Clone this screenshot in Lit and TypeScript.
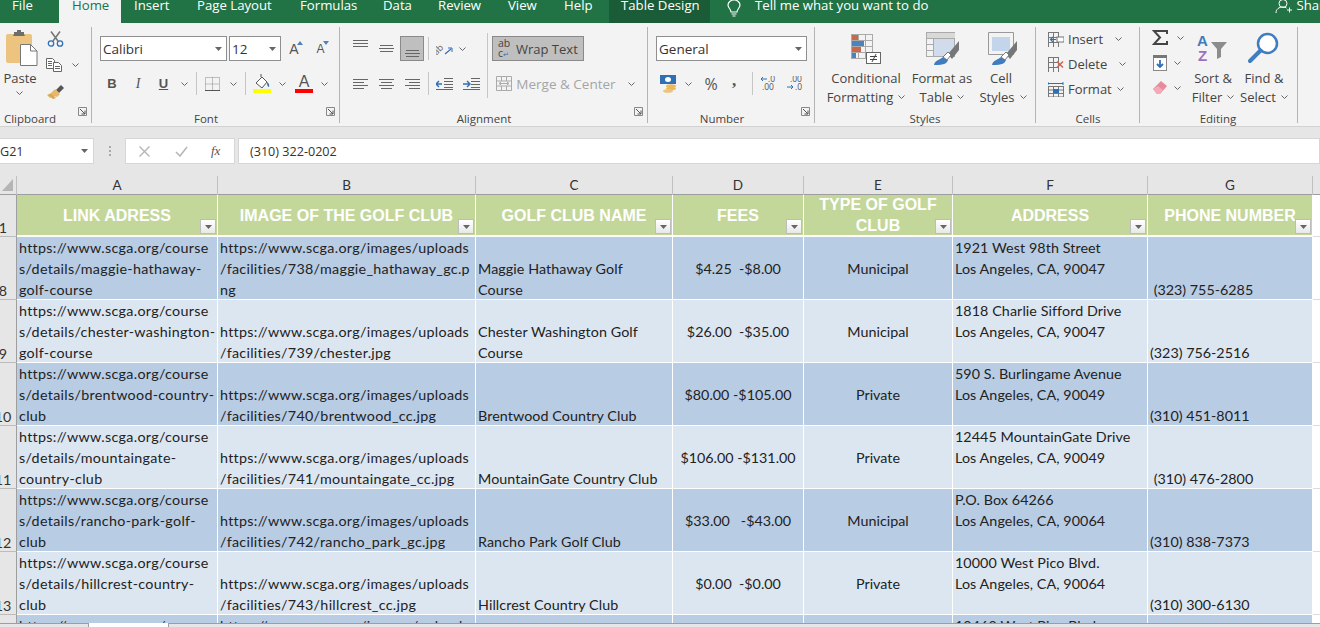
import { LitElement, html, css, svg, TemplateResult } from "lit";
import { customElement } from "lit/decorators.js";

type C = TemplateResult | string;
type Item = [number, number, C];
const place = (x0: number, items: Item[]) => {
  let cur = x0;
  return items.map(([x, w, c]) => {
    const m = x - cur;
    cur = x + w;
    return html`<div class="it" style="margin-left:${m}px;width:${w}px">${c}</div>`;
  });
};
const ic = (w: number, h: number, body: unknown) =>
  html`<svg width=${w} height=${h} viewBox="0 0 ${w} ${h}" fill="none">${body}</svg>`;

const chev = ic(7, 4, svg`<path d="M.5.5 3.5 3.5 6.5.5" stroke="#666" stroke-width="1"/>`);
const tri = ic(7, 4, svg`<path d="M0 0h7L3.500 4z" fill="#666"/>`);
const lines = (w: number, rows: [number, number, number][], col = "#666") =>
  svg`${rows.map(([x, y, l]) => svg`<rect x=${x} y=${y} width=${l} height="1" fill=${col}/>`)}`;

const paste = ic(32, 36, svg`
  <rect x="0" y="4" width="26" height="29" rx="2" fill="#edc47f"/>
  <path d="M8 4V2h3V0h4v2h3v2l1 2H7z" fill="#6d6d6d"/>
  <path d="M14.500 14.500h10l6.500 6.500v14.500h-16.500z" fill="#fff" stroke="#777"/>
  <path d="M24.500 14.500v6.500h6.500" stroke="#777"/>`);
const cut = ic(17, 16, svg`
  <path d="M4 .5 11 10M13 .5 6 10" stroke="#777" stroke-width="1.600"/>
  <circle cx="4" cy="12.500" r="2.700" stroke="#2f6fb5" stroke-width="1.300"/>
  <circle cx="13" cy="12.500" r="2.700" stroke="#2f6fb5" stroke-width="1.300"/>`);
const copy = ic(16, 14, svg`
  <path d="M.5.500h6l2 2v8h-8z" fill="#fff" stroke="#666"/>
  <path d="M7.500 4.500h5l3 3v6h-8z" fill="#fff" stroke="#666"/>
  ${lines(0, [[2, 3, 4], [2, 5, 4], [2, 7, 4], [9, 8, 5], [9, 10, 5]])}`);
const painter = ic(18, 16, svg`
  <path d="M9 5 14 0l3 3-5 5z" fill="#555"/>
  <path d="M8 4l5 5-3 3-4-1-3 2-3-3 4-2 1-1z" fill="#e8b867"/>
  <path d="M6 14 1 10l3-1 5 4z" fill="#d9a650"/>`);
const borders = ic(15, 14, svg`
  <path d="M.5.500h14v13H.5zM7.500.500v13M.5 7h14" stroke="#888" stroke-dasharray="1 1"/>
  <rect x="0" y="13" width="15" height="1" fill="#555"/>`);
const bucket = ic(18, 19, svg`
  <path d="M3 9 9 3l5 5-5 6z" fill="#fff" stroke="#555"/>
  <path d="M8 3V0" stroke="#555"/>
  <path d="M14 8c2 1 2.500 3 2 5-1.500-.5-2-2-2-5z" fill="#2f6fb5"/>
  <rect x="0" y="15" width="18" height="4" fill="#ffff00"/>`);
const redBar = ic(18, 4, svg`<rect width="18" height="4" fill="#ff0000"/>`);
const upTri = ic(6, 4, svg`<path d="M0 4h6L3 0z" fill="#4f81bd"/>`);
const dnTri = ic(6, 4, svg`<path d="M0 0h6L3 4z" fill="#4f81bd"/>`);
const al = (rows: [number, number, number][], h = 14) => ic(15, h, lines(15, rows, "#666"));
const topA = al([[0, 0, 15], [0, 3, 15], [0, 6, 15]], 9);
const midA = al([[1, 0, 13], [0, 3, 15], [1, 6, 13]], 7);
const botA = al([[1, 0, 13], [0, 3, 15], [1, 6, 13]], 7);
const leftA = al([[0, 0, 15], [0, 3, 11], [0, 6, 15], [0, 9, 11]], 10);
const centA = al([[0, 0, 15], [2, 3, 11], [0, 6, 15], [2, 9, 11]], 10);
const rightA = al([[0, 0, 15], [4, 3, 11], [0, 6, 15], [4, 9, 11]], 10);
const orient = ic(18, 14, svg`
  <text x="0" y="12" transform="rotate(-45 2 12)" font-family="Open Sans" font-size="9" fill="#666">ab</text>
  <path d="M9 12 15 7" stroke="#2f6fb5" stroke-width="1.200"/><path d="M12 6h4v4" stroke="#2f6fb5"/>`);
const outdent = ic(17, 12, svg`
  <path d="M6 6H0M3 3 0 6l3 3" stroke="#2f6fb5" stroke-width="1.400"/>
  ${lines(0, [[8, 0, 9], [8, 3, 9], [8, 6, 9], [8, 9, 9]])}<rect x="0" y="11" width="17" height="1" fill="#666"/>`);
const indent = ic(17, 12, svg`
  <path d="M0 6h6M4 3l3 3-3 3" stroke="#2f6fb5" stroke-width="1.400"/>
  ${lines(0, [[8, 0, 9], [8, 3, 9], [8, 6, 9], [8, 9, 9]])}<rect x="0" y="11" width="17" height="1" fill="#666"/>`);
const merge = ic(16, 15, svg`
  <path d="M.5.500h15v14H.5zM.5 5h15M.5 10h15M5.500.500V5M10.500.500V5M5.500 10v4.500M10.500 10v4.500" stroke="#aaa"/>
  <path d="M3 7.500h10M5 6 3 7.500 5 9M11 6l2 1.500L11 9" stroke="#aaa"/>`);
const abc = html`<span class="abc"><span>ab</span><span>c<small>↵</small></span></span>`;
const currency = ic(18, 18, svg`
  <rect x="0" y="0" width="16" height="9" fill="#2f6fb5"/>
  <ellipse cx="8" cy="4.500" rx="3" ry="2.500" fill="#fff"/>
  <ellipse cx="11" cy="11" rx="5" ry="1.800" fill="#e9b95e"/>
  <ellipse cx="11" cy="13.500" rx="5" ry="1.800" fill="#e9b95e"/>
  <ellipse cx="8" cy="16" rx="5" ry="1.800" fill="#edc47f"/>`);
const smallT = (x: number, y: number, t: string) =>
  svg`<text x=${x} y=${y} font-family="Open Sans" font-size="8.500" fill="#555">${t}</text>`;
const incD = ic(16, 15, svg`
  <path d="M6 3H0M2 1 0 3l2 2" stroke="#2f6fb5"/>${smallT(7, 6, ".0")}${smallT(1, 14, ".00")}`);
const decD = ic(16, 15, svg`
  ${smallT(3, 6, ".00")}<path d="M0 11h6M4 9l2 2-2 2" stroke="#2f6fb5"/>${smallT(8, 14, ".0")}`);
const grid = (x: number, y: number, cw: number, ch: number, nx: number, ny: number, col = "#aaa") => svg`
  ${Array.from({ length: nx + 1 }, (_, i) => svg`<rect x=${x + i * cw} y=${y} width="1" height=${ny * ch + 1} fill=${col}/>`)}
  ${Array.from({ length: ny + 1 }, (_, i) => svg`<rect x=${x} y=${y + i * ch} width=${nx * cw + 1} height="1" fill=${col}/>`)}`;
const condF = ic(30, 30, svg`
  ${grid(0, 0, 7, 6, 3, 4)}
  <rect x="1" y="1" width="6" height="5" fill="#c8694a"/>
  <rect x="1" y="7" width="12" height="5" fill="#4f81bd"/>
  <rect x="1" y="13" width="9" height="5" fill="#c8694a"/>
  <rect x="1" y="19" width="4" height="5" fill="#4f81bd"/>
  <rect x="15.500" y="18.500" width="14" height="11" fill="#fff" stroke="#666"/>
  <path d="M19 22.500h7M19 25.500h7M25 20l-4 8" stroke="#444"/>`);
const brush = svg`
  <path d="M22 22 33 9v9l-7 9z" fill="#777"/>
  <path d="M8 33c1-5 6-5 9-8l5 3c-1 3-3 5-14 5z" fill="#3f7cc0"/>
  <path d="M17 25l5-5 3 3-4 5z" fill="#fff" stroke="#777"/>`;
const fmtTable = ic(34, 33, svg`
  ${grid(0, 0, 7, 6, 4, 4)}
  <rect x="1" y="1" width="28" height="5" fill="#d9d9d9"/>
  <rect x="8" y="7" width="20" height="17" fill="#d0dcec"/>
  ${brush}`);
const cellSt = ic(30, 33, svg`
  <path d="M.5.500h25v22H.5z" stroke="#999"/>
  <rect x="4" y="5" width="18" height="14" fill="#c3d5ea"/>
  <g transform="translate(-4 0)">${brush}</g>`);
const insI = ic(16, 15, svg`
  ${grid(0, 0, 5, 5, 2, 3, "#777")}
  <rect x="9" y="5" width="7" height="5" fill="#fff" stroke="#777"/>
  <path d="M8 7.500H3M5 5 2.500 7.500 5 10" stroke="#2f6fb5" stroke-width="1.200"/>`);
const delI = ic(16, 15, svg`
  ${grid(0, 0, 5, 5, 2, 3, "#777")}
  <path d="M9 4.500l6 6M15 4.500l-6 6" stroke="#d9614c" stroke-width="1.500"/>`);
const fmtI = ic(16, 15, svg`
  <path d="M0 1.500h15M0 0v3M15 0v3" stroke="#2f6fb5"/>
  ${grid(0, 4, 5, 3.500, 3, 3, "#777")}
  <rect x="5" y="7" width="6" height="4" fill="#2f6fb5"/>`);
const sigma = ic(16, 15, svg`<path d="M15 4V1H2l6 6.500L2 14h13v-3" stroke="#444" stroke-width="2"/>`);
const fillI = ic(14, 16, svg`
  <rect x=".5" y=".5" width="13" height="15" fill="#fff" stroke="#888"/>
  <rect x="0" y="0" width="14" height="3" fill="#777"/>
  <path d="M7 5v7M4 9l3 3 3-3" stroke="#2f6fb5" stroke-width="1.800"/>`);
const eraser = ic(14, 13, svg`
  <path d="M0 8 8 0l6 5-7 8H4z" fill="#e78a9b"/><path d="M0 8l4 5h3l3-4-5-4z" fill="#f2aab6"/>`);
const sortI = ic(31, 29, svg`
  <text x="0" y="13" font-family="Liberation Sans" font-weight="700" font-size="15" fill="#3f7cc0">A</text>
  <text x="1" y="28" font-family="Liberation Sans" font-weight="700" font-size="15" fill="#9e6fbf">Z</text>
  <path d="M14 9h16l-6 7v8l-4 2v-10z" fill="#8c8c8c"/>`);
const findI = ic(31, 31, svg`
  <circle cx="19.500" cy="11.500" r="9.500" stroke="#3f7cc0" stroke-width="2.500" fill="#fff"/>
  <path d="M12.500 18.500 2 29" stroke="#3f7cc0" stroke-width="4" stroke-linecap="round"/>`);
const launcher = ic(9, 9, svg`
  <path d="M.5 8.500v-8h8v8z" stroke="#888"/><path d="M2 2l5 5M7 3.500V7H3.500" stroke="#555"/>`);
const bulb = ic(14, 17, svg`
  <path d="M4 12c0-3-3-4-3-7a6 5 0 0 1 12 0c0 3-3 4-3 7z" stroke="#fff" stroke-width="1.200"/>
  <path d="M4.500 14h5M5.500 16h3" stroke="#fff"/>`);
const person = ic(17, 13, svg`
  <circle cx="8" cy="3.500" r="4" stroke="#fff"/>
  <path d="M1 13c0-4 3-6 7-6 1.500 0 2.500.3 3.500 1M12 10h5M14.500 7.500v5" stroke="#fff"/>`);
const xI = ic(11, 11, svg`<path d="M.5.500l10 10M10.500.500l-10 10" stroke="#b5b5b5" stroke-width="1.400"/>`);
const chk = ic(13, 11, svg`<path d="M1 6l4 4 7-9" stroke="#b5b5b5" stroke-width="1.500"/>`);

const t = (s: string, cls = "") => html`<span class=${"tx " + cls}>${s}</span>`;
const tc = (s: string) => html`<span class="tx">${s}<i class="tch">${chev}</i></span>`;
const box = (s: string) => html`<div class="combo"><span>${s}</span>${tri}</div>`;

interface Row { y: number; h: number; items: Item[] }
interface Group { x0: number; w: number; label: string; lx: number; launch?: number; rows: Row[] }

const groups: Group[] = [
  {
    x0: 0, w: 92, label: "Clipboard", lx: 30, launch: 78,
    rows: [
      { y: 30, h: 18, items: [[6, 32, html`<span class="pst">${paste}</span>`], [47, 17, cut]] },
      { y: 56, h: 18, items: [[46, 16, copy], [72, 7, chev]] },
      { y: 70, h: 15, items: [[0, 40, t("Paste")]] },
      { y: 85, h: 16, items: [[16, 7, chev], [47, 18, painter]] },
    ],
  },
  {
    x0: 92, w: 248, label: "Font", lx: 206, launch: 326,
    rows: [
      {
        y: 36, h: 25,
        items: [
          [100, 127, box("Calibri")], [229, 52, box("12")],
          [288, 16, html`<span class="aa big">A</span><span class="sup">${upTri}</span>`],
          [315, 15, html`<span class="aa">A</span><span class="sup">${dnTri}</span>`],
        ],
      },
      {
        y: 72, h: 23,
        items: [
          [107, 10, html`<b class="bi">B</b>`], [133, 10, html`<i class="bi">I</i>`], [158, 11, html`<u class="bi bu">U</u>`],
          [181, 7, chev], [196, 1, html`<div class="vs"></div>`], [205, 15, borders], [230, 7, chev],
          [245, 1, html`<div class="vs"></div>`], [253, 18, bucket], [279, 7, chev],
          [295, 18, html`<span class="fc"><span class="aa fa">A</span>${redBar}</span>`], [321, 7, chev],
        ],
      },
    ],
  },
  {
    x0: 340, w: 308, label: "Alignment", lx: 484, launch: 634,
    rows: [
      {
        y: 36, h: 25,
        items: [
          [353, 15, html`<span class="up3">${topA}</span>`], [379, 15, midA],
          [400, 24, html`<div class="sel"><span class="dn">${botA}</span></div>`],
          [428, 1, html`<div class="vs"></div>`], [436, 18, orient], [459, 7, chev],
          [487, 1, html`<div class="vs tall"></div>`],
          [492, 92, html`<div class="sel wrap">${abc}<span class="tx wt2">Wrap Text</span></div>`],
        ],
      },
      {
        y: 72, h: 23,
        items: [
          [353, 15, leftA], [379, 15, centA], [405, 15, rightA], [428, 1, html`<div class="vs"></div>`],
          [436, 17, outdent], [463, 17, indent], [496, 16, merge],
          [516, 100, t("Merge & Center", "off wt")], [628, 7, chev],
        ],
      },
    ],
  },
  {
    x0: 648, w: 167, label: "Number", lx: 722, launch: 801,
    rows: [
      { y: 36, h: 25, items: [[656, 151, box("General")]] },
      {
        y: 72, h: 23,
        items: [
          [660, 18, currency], [685, 7, chev], [704, 14, html`<span class="pct">%</span>`],
          [731, 6, html`<b class="pct cm">,</b>`], [752, 1, html`<div class="vs"></div>`],
          [761, 16, incD], [787, 16, decD],
        ],
      },
    ],
  },
  {
    x0: 815, w: 221, label: "Styles", lx: 925,
    rows: [
      { y: 32, h: 33, items: [[851, 30, condF], [926, 34, fmtTable], [988, 30, cellSt]] },
      { y: 69, h: 18, items: [[821, 90, t("Conditional")], [907, 70, t("Format as")], [976, 50, t("Cell")]] },
      { y: 87, h: 19, items: [[821, 90, tc("Formatting")], [907, 70, tc("Table")], [976, 54, tc("Styles")]] },
    ],
  },
  {
    x0: 1036, w: 104, label: "Cells", lx: 1088,
    rows: [
      { y: 30, h: 18, items: [[1048, 16, insI], [1068, 40, t("Insert", "l")], [1115, 7, chev]] },
      { y: 55, h: 18, items: [[1048, 16, delI], [1068, 44, t("Delete", "l")], [1119, 7, chev]] },
      { y: 80, h: 18, items: [[1048, 16, fmtI], [1068, 46, t("Format", "l")], [1117, 7, chev]] },
    ],
  },
  { x0: 1140, w: 158, label: "Editing", lx: 1218, rows: [] },
];

const editingBody = html`
  <div class="edit">
    <div class="r" style="height:15px;margin-top:3px">${place(1140, [[1152, 16, sigma], [1177, 7, chev]])}</div>
    <div class="r" style="height:16px;margin-top:10px">${place(1140, [[1153, 14, fillI], [1174, 7, chev]])}</div>
    <div class="r" style="height:13px;margin-top:10px">${place(1140, [[1153, 14, eraser], [1174, 7, chev]])}</div>
  </div>
  <div class="editb">
    <div class="r" style="height:31px;margin-top:5px">${place(1190, [[1197, 31, sortI], [1248, 31, findI]])}</div>
    <div class="r" style="height:18px;margin-top:6px">${place(1190, [[1190, 46, t("Sort &")], [1241, 46, t("Find &")]])}</div>
    <div class="r" style="height:19px;margin-top:0">${place(1190, [[1190, 46, tc("Filter")], [1239, 50, tc("Select")]])}</div>
  </div>`;

const tabs: [string, number, number, string][] = [
  ["File", 59, 12, ""], ["Home", 62, 13, "home"], ["Insert", 63, 13, ""], ["Page Layout", 103, 13, ""],
  ["Formulas", 83, 13, ""], ["Data", 55, 13, ""], ["Review", 70, 13, ""], ["View", 56, 13, ""],
  ["Help", 58, 13, ""], ["Table Design", 101, 12, "td"],
];

const cols = ["A", "B", "C", "D", "E", "F", "G"];
const heads = ["LINK ADRESS", "IMAGE OF THE GOLF CLUB", "GOLF CLUB NAME", "FEES", "TYPE OF GOLF CLUB", "ADDRESS", "PHONE NUMBER"];
const U = "https://www.scga.org/images/uploads";
const A0 = "https://www.scga.org/course";
interface D { n: string; a: string[]; b: string[]; c: string[]; d: string; e: string; f: string[]; g: string }
const data: D[] = [
  { n: "8", a: [A0, "s/details/maggie-hathaway-", "golf-course"], b: [U, "/facilities/738/maggie_hathaway_gc.p", "ng"], c: ["Maggie Hathaway Golf", "Course"], d: "$4.25  -$8.00", e: "Municipal", f: ["1921 West 98th Street", "Los Angeles, CA, 90047"], g: " (323) 755-6285" },
  { n: "9", a: [A0, "s/details/chester-washington-", "golf-course"], b: [U, "/facilities/739/chester.jpg"], c: ["Chester Washington Golf", "Course"], d: "$26.00  -$35.00", e: "Municipal", f: ["1818 Charlie Sifford Drive", "Los Angeles, CA, 90047"], g: "(323) 756-2516" },
  { n: "10", a: [A0, "s/details/brentwood-country-", "club"], b: [U, "/facilities/740/brentwood_cc.jpg"], c: ["Brentwood Country Club"], d: "$80.00 -$105.00", e: "Private", f: ["590 S. Burlingame Avenue", "Los Angeles, CA, 90049"], g: "(310) 451-8011" },
  { n: "11", a: [A0, "s/details/mountaingate-", "country-club"], b: [U, "/facilities/741/mountaingate_cc.jpg"], c: ["MountainGate Country Club"], d: "$106.00 -$131.00", e: "Private", f: ["12445 MountainGate Drive", "Los Angeles, CA, 90049"], g: " (310) 476-2800" },
  { n: "12", a: [A0, "s/details/rancho-park-golf-", "club"], b: [U, "/facilities/742/rancho_park_gc.jpg"], c: ["Rancho Park Golf Club"], d: "$33.00   -$43.00", e: "Municipal", f: ["P.O. Box 64266", "Los Angeles, CA, 90064"], g: "(310) 838-7373" },
  { n: "13", a: [A0, "s/details/hillcrest-country-", "club"], b: [U, "/facilities/743/hillcrest_cc.jpg"], c: ["Hillcrest Country Club"], d: "$0.00  -$0.00", e: "Private", f: ["10000 West Pico Blvd.", "Los Angeles, CA, 90064"], g: "(310) 300-6130" },
];
const cellLines = (ls: string[]) => ls.map((l) => html`<div>${l}</div>`);

@customElement("app-root")
export class AppRoot extends LitElement {
  static styles = css`
    :host { display: flex; flex-direction: column; width: 1320px; height: 627px; overflow: hidden; background: #fff; font-family: "Open Sans", sans-serif; color: #444; }
    .tabs { display: flex; height: 23px; flex: none; background: #217346; color: #fff; font-size: 13.200px; line-height: 11px; overflow: hidden; white-space: nowrap; }
    .tab { box-sizing: border-box; height: 23px; flex: none; }
    .tab.home { background: #f3f3f3; color: #217346; }
    .tab.td { background: #1b5c38; }
    .tell { display: flex; align-items: flex-start; }
    .bulbw { margin: 0 14px 0 17px; height: 17px; }
    .share { margin-left: 347px; display: flex; gap: 4px; }
    .ribbon { display: flex; flex: none; height: 104px; box-sizing: border-box; padding-top: 4px; background: #f3f3f3; border-bottom: 1px solid #d2d2d2; }
    .group { position: relative; flex: none; box-sizing: border-box; height: 96px; border-right: 1px solid #b4b4b4; display: flex; flex-direction: column; }
    .rows { flex: 1; min-height: 0; position: relative; }
    .r { display: flex; align-items: center; flex: none; }
    .it { flex: none; display: flex; align-items: center; justify-content: center; position: relative; height: 100%; white-space: nowrap; }
    .pst { display: flex; margin-top: 18px; }
    .lab { flex: none; height: 12px; margin-bottom: -2px; font-size: 11.500px; line-height: 12px; display: flex; color: #444; }
    .tx { font-size: 13px; line-height: 16px; white-space: nowrap; color: #444; display: inline-flex; align-items: center; }
    .tx.l { width: 100%; }
    .tx.off { color: #a5a5a5; }
    .tx.wt { font-size: 13.500px; }
    .tx.wt2 { font-size: 13px; }
    .tch { margin-left: 5px; display: inline-flex; }
    .combo { box-sizing: border-box; width: 100%; height: 25px; background: #fff; border: 1px solid #8f8f8f; display: flex; align-items: center; justify-content: space-between; padding: 0 4px 0 2px; font-size: 13.500px; color: #333; }
    .combo svg { flex: none; }
    .aa { font-family: "Liberation Sans", sans-serif; font-size: 12px; color: #555; line-height: 1; }
    .aa.big { font-size: 14px; }
    .sup { display: inline-flex; align-self: flex-start; margin-top: 5px; margin-left: -2px; }
    .fc { display: flex; flex-direction: column; align-items: center; }
    .fa { font-size: 16px; line-height: 14px; margin-bottom: 0; }
    .bi { font-family: "Liberation Serif", serif; font-size: 14px; color: #555; }
    b.bi { font-family: "Liberation Sans", sans-serif; font-size: 13px; }
    .bu { font-family: "Liberation Sans", sans-serif; font-weight: 700; font-size: 13px; }
    .vs { width: 1px; height: 23px; background: #c6c6c6; }
    .vs.tall { height: 65px; position: absolute; top: -3px; }
    .sel { box-sizing: border-box; width: 100%; height: 25px; background: #bfbfbf; border: 1px solid #8a8a8a; display: flex; align-items: center; justify-content: center; }
    .dn { display: flex; margin-top: 9px; }
    .up3 { display: flex; margin-top: -9px; }
    .wrap { justify-content: flex-start; padding-left: 5px; gap: 3px; }
    .abc { display: flex; flex-direction: column; font-size: 10.500px; line-height: 10px; color: #444; width: 15px; }
    .abc small { font-size: 7px; color: #2f6fb5; }
    .pct { font-size: 16px; color: #555; line-height: 1; }
    .cm { font-family: "Liberation Serif", serif; font-size: 17px; margin-top: -6px; }
    .launch { position: absolute; bottom: 2px; }
    .edit, .editb { position: absolute; top: 0; left: 0; display: flex; flex-direction: column; }
    .editb { left: 50px; }
    .fbar { flex: none; height: 49px; box-sizing: border-box; background: #e6e6e6; padding-top: 11px; display: flex; align-items: flex-start; font-size: 12.600px; color: #333; }
    .fb { box-sizing: border-box; height: 26px; background: #fff; border: 1px solid #d6d6d6; display: flex; align-items: center; flex: none; }
    .nm { width: 94px; justify-content: space-between; padding: 0 5px 0 0; border-left: 0; }
    .dots { width: 31px; flex: none; height: 26px; display: flex; flex-direction: column; align-items: center; justify-content: center; gap: 2px; }
    .dots i { width: 2px; height: 2px; background: #a8a8a8; }
    .fxs { width: 110px; justify-content: flex-start; padding-left: 13px; gap: 0; }
    .fxs svg:nth-child(2) { margin-left: 25px; }
    .fxi { font-family: "Liberation Serif", serif; font-style: italic; font-size: 13px; margin-left: 23px; color: #555; }
    .inp { margin-left: 3px; flex: 1; padding-left: 11px; }
    .sheet { flex: 1; min-height: 0; overflow: hidden; font-family: Lato, sans-serif; font-size: 14.300px; color: #222; }
    .row { display: grid; grid-template-columns: 17px 201px 258px 197px 131px 149px 195px 165px 1fr; }
    .colh { height: 19px; box-sizing: border-box; background: #e6e6e6; border-bottom: 1px solid #9e9e9e; }
    .colh > div { border-right: 1px solid #c0c0c0; text-align: center; line-height: 19px; font-size: 13.500px; color: #333; }
    .corner { display: flex; padding: 3px 0 0 2px; box-sizing: border-box; }
    .hr { height: 42px; }
    .cell { box-sizing: border-box; overflow: hidden; border-right: 1px solid #fff; border-bottom: 1px solid #fff; padding: 0 2px; line-height: 21px; white-space: pre; display: flex; flex-direction: column; height: 63px; }
    .hr .cell { height: 42px; border-bottom-width: 2px; background: #c4d79b; color: #fff; font-family: "Liberation Sans", sans-serif; font-weight: 700; font-size: 16px; position: relative; align-items: center; justify-content: center; text-align: center; white-space: normal; }
    .dk .cell { background: #b8cce4; }
    .lt .cell { background: #dce6f1; }
    .bot { justify-content: flex-end; }
    .bot > div { transform: translateY(1px); }
    .ctr { justify-content: center; align-items: center; text-align: center; }
    .topc { justify-content: flex-start; }
    .url { letter-spacing: .3px; }
    .nm2 { letter-spacing: .08px; }
    .rh { box-sizing: border-box; height: 63px; overflow: hidden; background: #e6e6e6; border-right: 1px solid #9e9e9e; border-bottom: 1px solid #bcbcbc; display: flex; align-items: flex-end; line-height: 16px; color: #333; }
    .hr .rh { height: 42px; }
    .rh span { flex: none; width: 26px; margin-left: -10px; text-align: center; }
    .end { box-sizing: border-box; border-bottom: 1px solid #dcdcdc; }
    .flt { position: absolute; right: 1px; bottom: 1px; box-sizing: border-box; width: 16px; height: 15px; background: linear-gradient(#fff, #e8e8e8); border: 1px solid #bdbdbd; display: flex; align-items: center; justify-content: center; }
    .tabbar { flex: none; height: 4px; box-sizing: border-box; background: #e6e6e6; border-top: 1px solid #9e9e9e; display: flex; }
    .atab { margin-left: 88px; width: 81px; box-sizing: border-box; margin-top: -1px; height: 4px; background: #fff; border-left: 1px solid #9e9e9e; border-right: 1px solid #9e9e9e; }
  `;

  private group(g: Group, body?: TemplateResult) {
    let prev = 27;
    return html`<div class="group" style="width:${g.w}px">
      <div class="rows">
        ${g.rows.map((r) => {
          const m = r.y - prev;
          prev = r.y + r.h;
          return html`<div class="r" style="height:${r.h}px;margin-top:${m}px">${place(g.x0, r.items)}</div>`;
        })}
        ${body ?? ""}
      </div>
      <div class="lab">
        ${place(g.x0, [[g.lx - 30, 60, g.label]])}
      </div>
      ${g.launch ? html`<span class="launch" style="left:${g.launch - g.x0}px">${launcher}</span>` : ""}
    </div>`;
  }

  render() {
    const [clip, font, align, num, sty, cells, edit] = groups;
    return html`
      <div class="tabs">
        ${tabs.map(([n, w, p, c]) => html`<div class="tab ${c}" style="width:${w}px;padding-left:${p}px">${n}</div>`)}
        <div class="tell">
          <span class="bulbw">${bulb}</span><span>Tell me what you want to do</span>
          <span class="share">${person}<span>Share</span></span>
        </div>
      </div>
      <div class="ribbon">
        ${this.group(clip)}${this.group(font)}${this.group(align)}${this.group(num)}${this.group(sty)}${this.group(cells)}
        ${this.group(edit, editingBody)}
      </div>
      <div class="fbar">
        <div class="fb nm"><span>G21</span>${tri}</div>
        <div class="dots"><i></i><i></i><i></i></div>
        <div class="fb fxs">${xI}${chk}<span class="fxi">fx</span></div>
        <div class="fb inp">(310) 322-0202</div>
      </div>
      <div class="sheet">
        <div class="row colh">
          <div class="corner">${ic(11, 12, svg`<path d="M11 0v12H0z" fill="#b5b5b5"/>`)}</div>
          ${cols.map((c) => html`<div>${c}</div>`)}<span></span>
        </div>
        <div class="row hr">
          <div class="rh"><span>1</span></div>
          ${heads.map((h) => html`<div class="cell">${h}<span class="flt">${tri}</span></div>`)}
          <div class="end"></div>
        </div>
        ${data.map((d, i) => html`
          <div class="row ${i % 2 ? "lt" : "dk"}">
            <div class="rh"><span>${d.n}</span></div>
            <div class="cell bot url">${cellLines(d.a)}</div>
            <div class="cell bot url">${cellLines(d.b)}</div>
            <div class="cell bot nm2">${cellLines(d.c)}</div>
            <div class="cell ctr"><div>${d.d}</div></div>
            <div class="cell ctr"><div>${d.e}</div></div>
            <div class="cell topc nm2">${cellLines(d.f)}</div>
            <div class="cell bot"><div>${d.g}</div></div>
            <div class="end"></div>
          </div>`)}
        <div class="row dk">
          <div class="rh"></div>
          <div class="cell topc url"><div>${A0}</div></div>
          <div class="cell topc url"><div>${U}</div></div>
          <div class="cell"></div><div class="cell"></div><div class="cell"></div>
          <div class="cell topc nm2"><div>10460 West Pico Blvd.</div></div>
          <div class="cell"></div><div class="end"></div>
        </div>
      </div>
      <div class="tabbar"><div class="atab"></div></div>
    `;
  }
}
